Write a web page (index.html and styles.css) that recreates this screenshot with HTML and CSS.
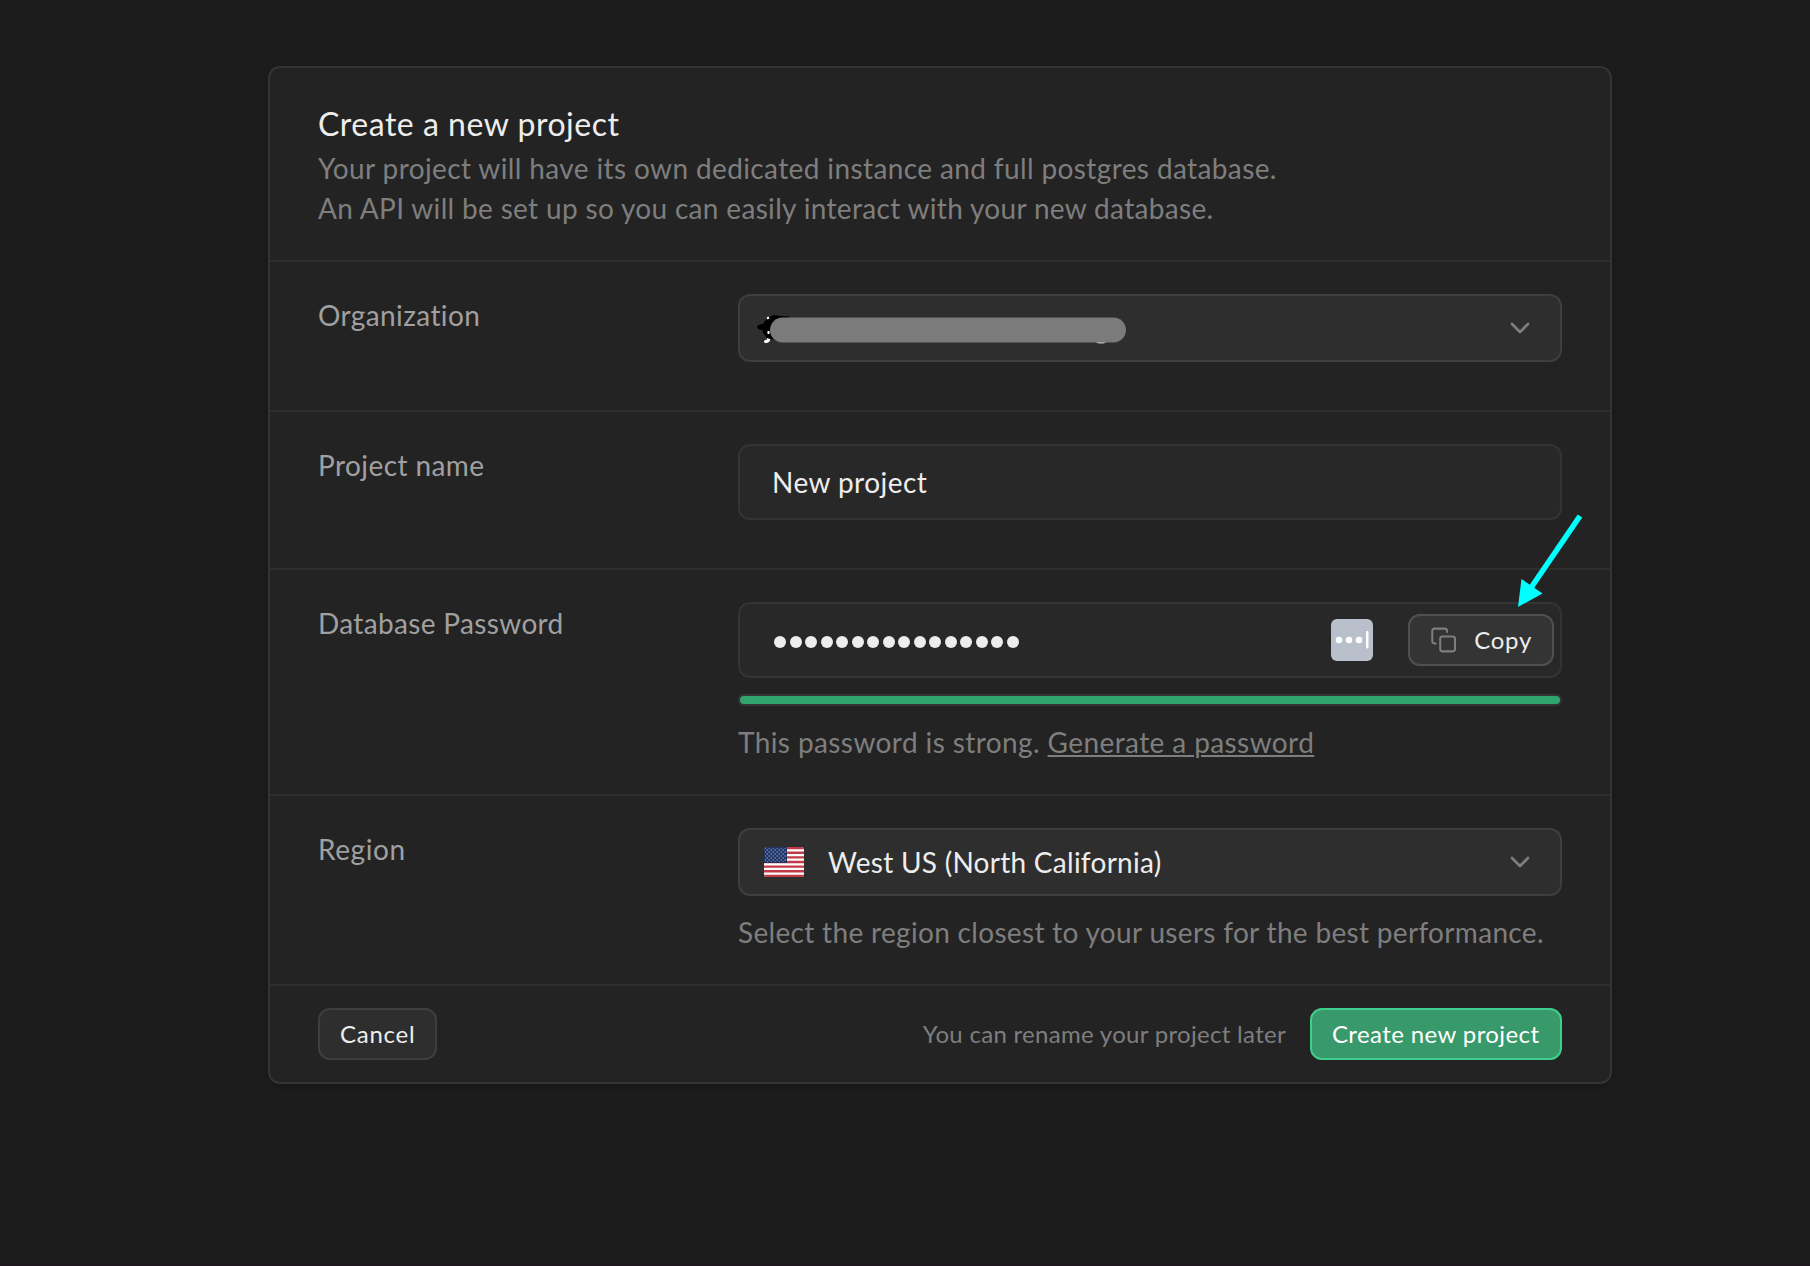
FILE: index.html
```html
<!DOCTYPE html>
<html lang="en">
<head>
<meta charset="utf-8">
<title>Create a new project</title>
<link rel="stylesheet" href="styles.css">
</head>
<body>
<main class="page">
  <form class="card">
    <header class="card-header">
      <h1 class="title">Create a new project</h1>
      <p class="lead lead-first">Your project will have its own dedicated instance and full postgres database.</p>
      <p class="lead">An API will be set up so you can easily interact with your new database.</p>
    </header>

    <section class="row row-spaced">
      <label class="label">Organization</label>
      <div class="field">
        <div class="select">
          <svg class="scribble" width="376" height="36" viewBox="0 0 376 36">
            <path d="M8.500 28.500q3.500 0 3.500-4" stroke="#fff" stroke-width="3" stroke-linecap="round" fill="none"/>
            <path d="M0 14q1-3 6-3q3-6 10-9q9 1 17 1.500l-8 6-8 17q-7 0-9-4q-3-3-2.500-5.500q-5 0-5.500-3z" fill="#000"/>
            <path d="M10 5.500l2-1M11.500 18v3" stroke="#fff" stroke-width="2"/>
            <ellipse cx="344" cy="28.500" rx="5" ry="2" fill="#ccc"/>
            <rect x="13" y="4.500" width="356" height="25" rx="12.500" fill="#7b7b7b"/>
          </svg>
          <svg class="chevron" viewBox="0 0 24 24"><path d="M6 9l6 6 6-6"/></svg>
        </div>
      </div>
    </section>

    <section class="row row-spaced">
      <label class="label label-project">Project name</label>
      <div class="field">
        <div class="input"><span class="value">New project</span></div>
      </div>
    </section>

    <section class="row">
      <label class="label label-password">Database Password</label>
      <div class="field">
        <div class="input input-password">
          <div class="dots"><i></i><i></i><i></i><i></i><i></i><i></i><i></i><i></i><i></i><i></i><i></i><i></i><i></i><i></i><i></i><i></i></div>
          <svg class="manager" width="42" height="42" viewBox="0 0 42 42">
            <rect width="42" height="42" rx="6" fill="#b9c0cb"/>
            <g fill="#fff"><circle cx="8" cy="21" r="3.300"/><circle cx="18" cy="21" r="3.300"/><circle cx="28" cy="21" r="3.300"/><rect x="35" y="12" width="2.500" height="17.500" rx="1"/></g>
          </svg>
          <button type="button" class="btn btn-copy">
            <svg class="copy-icon" viewBox="0 0 24 24"><rect x="9" y="9" width="13" height="13" rx="2"/><path d="M5 15H4a2 2 0 0 1-2-2V4a2 2 0 0 1 2-2h9a2 2 0 0 1 2 2v1"/></svg>
            <span>Copy</span>
          </button>
        </div>
        <div class="strength"><div class="strength-bar"></div></div>
        <p class="help help-strength">This password is strong. <a class="link">Generate a password</a></p>
      </div>
    </section>

    <section class="row">
      <label class="label label-region">Region</label>
      <div class="field">
        <div class="select">
          <svg class="flag" width="40" height="30" viewBox="0 0 40 30">
            <defs>
              <clipPath id="flag-shape"><rect width="40" height="30" rx="3"/></clipPath>
              <pattern id="stars" width="4" height="4" patternUnits="userSpaceOnUse"><path d="M.5 1h1.300M2.500 3h1.300" stroke="#dce2ee" stroke-width="1.200"/></pattern>
            </defs>
            <g clip-path="url(#flag-shape)">
              <rect width="40" height="30" fill="#fff"/>
              <path d="M0 1.150h40M0 5.770h40M0 10.380h40M0 15h40M0 19.620h40M0 24.230h40M0 28.850h40" stroke="#c23a45" stroke-width="2.310"/>
              <rect width="23" height="16" fill="#1f3568"/>
              <rect x="1" y="1" width="21" height="14" fill="url(#stars)" opacity=".8"/>
            </g>
          </svg>
          <span class="value value-region">West US (North California)</span>
          <svg class="chevron" viewBox="0 0 24 24"><path d="M6 9l6 6 6-6"/></svg>
        </div>
        <p class="help help-region">Select the region closest to your users for the best performance.</p>
      </div>
    </section>

    <footer class="card-footer">
      <button type="button" class="btn btn-cancel">Cancel</button>
      <span class="hint">You can rename your project later</span>
      <button type="button" class="btn btn-primary">Create new project</button>
    </footer>

    <svg class="arrow" width="72" height="100" viewBox="0 0 72 100">
      <path d="M67 3L18.500 74" stroke="#00ffff" stroke-width="5.500"/>
      <path d="M5 94L8.500 66 29.500 80.500z" fill="#00ffff"/>
    </svg>
  </form>
</main>
</body>
</html>
```
FILE: styles.css
```css
* { box-sizing: border-box; }

body {
  margin: 0;
  background: #1c1c1c;
  color: #ededed;
  font: 28px/40px Lato, "Liberation Sans", sans-serif;
  letter-spacing: .33px;
}

h1, p { margin: 0; font-weight: 400; }

.page {
  min-height: 1266px;
  padding: 66px 198px 0 268px;
  border-bottom: 1px solid #1d161a;
}

.card {
  position: relative;
  border: 2px solid #343434;
  border-radius: 12px;
  background: #232323;
  box-shadow: 0 2px 6px rgba(0, 0, 0, .2);
}

.card-header {
  height: 194px;
  padding: 32px 48px 0;
  border-bottom: 2px solid #2e2e2e;
}

.title {
  font-size: 32px;
  line-height: 48px;
  letter-spacing: .52px;
}

.lead { color: #7e7e7e; }
.lead-first { letter-spacing: .38px; }

.row {
  display: grid;
  grid-template-columns: 420px 1fr;
  padding: 32px 48px;
  border-bottom: 2px solid #2e2e2e;
}

.row-spaced { padding-bottom: 48px; }

.label { padding-top: 1px; color: #a0a0a0; letter-spacing: .4px; }
.label-project { letter-spacing: .42px; }
.label-password { letter-spacing: .34px; }
.label-region { letter-spacing: .6px; }

.select, .input {
  display: flex;
  align-items: center;
  border-radius: 12px;
}

.select {
  height: 68px;
  padding: 0 24px;
  border: 2px solid #3e3e3e;
  background: #2e2e2e;
}

.input {
  height: 76px;
  padding: 0 6px 0 32px;
  border: 2px solid #343434;
  background: #282828;
}

.field { width: 824px; min-width: 0; }

.value { letter-spacing: .45px; }
.value-region { margin-left: 24px; letter-spacing: .27px; }

.scribble { margin: 6px 0 0 -7px; }

.chevron {
  width: 32px;
  height: 32px;
  margin-left: auto;
  fill: none;
  stroke: #7e7e7e;
  stroke-width: 2;
  stroke-linecap: round;
  stroke-linejoin: round;
}

.dots { display: flex; gap: 3.52px; margin-left: 2px; padding-top: 3px; }
.dots i { width: 12px; height: 12px; border-radius: 50%; background: #ededed; }

.manager { margin: 0 35px 0 auto; }

.btn {
  display: flex;
  align-items: center;
  height: 52px;
  padding: 0 20px;
  border: 2px solid #3e3e3e;
  border-radius: 12px;
  background: #2e2e2e;
  color: #ededed;
  font: 24px/32px Lato, "Liberation Sans", sans-serif;
  letter-spacing: .4px;
  white-space: nowrap;
}

.btn-copy { width: 146px; gap: 17px; border-color: #505050; background: #343434; letter-spacing: .7px; }
.btn-cancel { width: 119px; margin-right: auto; letter-spacing: .75px; }
.btn-primary { width: 252px; border-color: #3ecf8e; background: #38996b; color: #fff; }

.copy-icon {
  width: 28px;
  height: 28px;
  fill: none;
  stroke: #7e7e7e;
  stroke-width: 1.8;
  stroke-linecap: round;
  stroke-linejoin: round;
}

.strength {
  height: 12px;
  margin-top: 16px;
  padding: 2px;
  border-radius: 6px;
  background: #343434;
}
.strength-bar { height: 8px; border-radius: 4px; background: #30a46c; }

.help { margin-top: 16px; color: #7e7e7e; white-space: nowrap; }
.help-strength { letter-spacing: .4px; }
.help-region { letter-spacing: .32px; }

.link {
  letter-spacing: .4px;
  text-decoration: underline;
  text-decoration-thickness: 2px;
  text-underline-offset: 2px;
}

.card-footer {
  display: flex;
  align-items: center;
  height: 96px;
  padding: 0 48px;
}

.hint { margin-right: 24px; color: #7e7e7e; font-size: 24px; letter-spacing: .3px; }

/* Callout pointing at the copy button */
.arrow { position: absolute; left: 1243px; top: 445px; }
```
